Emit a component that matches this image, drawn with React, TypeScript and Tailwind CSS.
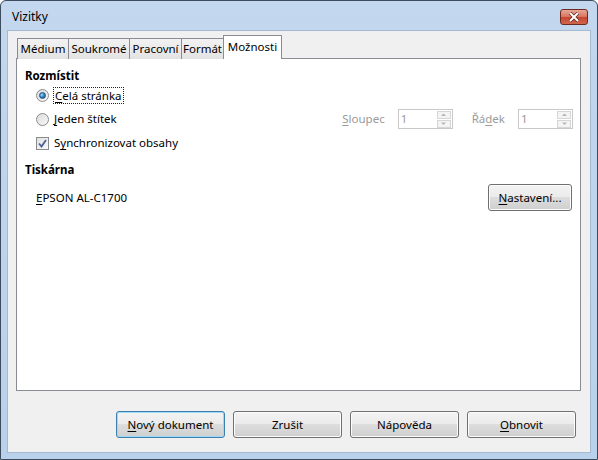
import React from "react";

const U = ({ children }: { children: React.ReactNode }) => <span className="underline underline-offset-2">{children}</span>;

const Radio = ({ checked }: { checked?: boolean }) => (
  <div className="w-[13px] h-[13px] rounded-full border border-[#8a8b8c] bg-gradient-to-br from-[#dcdcdc] to-[#f8f8f8] flex items-center justify-center shrink-0">
    {checked && (
      <div className="w-[7px] h-[7px] rounded-full bg-[radial-gradient(circle_at_35%_35%,#9fd6f7,#2a7dbd_55%,#1a4f86)] border border-[#1f4f7c]" />
    )}
  </div>
);

const Checkbox = () => (
  <div className="w-[13px] h-[13px] border border-[#8a8b8c] bg-gradient-to-br from-[#e0e0e0] to-[#fafafa] flex items-center justify-center shrink-0">
    <svg width="9" height="9" viewBox="0 0 9 9">
      <path d="M1 4.5 L3.5 7.5 L8 1" fill="none" stroke="#4a5f97" strokeWidth="1.8" />
    </svg>
  </div>
);

const Spin = () => (
  <div className="w-[55px] h-[20px] border border-[#c9c9c9] bg-white flex items-center justify-between pl-[2px] pr-px">
    <span className="text-[#9a9a9a] leading-none">1</span>
    <div className="flex flex-col gap-px">
      {["M1 4 L3.5 1.5 L6 4", "M1 1.5 L3.5 4 L6 1.5"].map((d) => (
        <div key={d} className="w-[14px] h-[8px] border border-[#d6d6d6] bg-[#f4f4f4] flex items-center justify-center">
          <svg width="7" height="5" viewBox="0 0 7 5"><path d={d} fill="#b5b5b5" /></svg>
        </div>
      ))}
    </div>
  </div>
);

const Button = ({ children, def, w = "w-[109px]" }: { children: React.ReactNode; def?: boolean; w?: string }) => (
  <button
    className={`${w} h-[27px] rounded-[3px] border ${def ? "border-[#3c7fb1] shadow-[inset_0_0_0_1px_#9fd9f5]" : "border-[#707070] shadow-[inset_0_0_0_1px_#fcfcfc]"} bg-[linear-gradient(#f3f3f3_0%,#ebebeb_49%,#dddddd_50%,#cfcfcf_100%)] text-black text-[11.5px]`}
  >
    {children}
  </button>
);

const Tab = ({ label, w }: { label: string; w: string }) => (
  <div className={`${w} h-[21px] -mr-px border border-[#898c95] border-b-0 bg-gradient-to-b from-[#f2f2f2] to-[#e3e3e3] flex items-center justify-center`}>{label}</div>
);

export default function App() {
  return (
    <div className="w-[598px] h-[460px] flex flex-col bg-gradient-to-b from-[#c3d7ee] to-[#b9d1ea] border border-[#3c4c5e] rounded-t-[6px] font-['Segoe_UI','Noto_Sans',sans-serif] text-[11.5px] text-black overflow-hidden">
      {/* title bar */}
      <div className="h-[29px] flex items-center justify-between pl-[11px] pr-[9px] pt-[2px] text-[12px]">
        <span>Vizitky</span>
        <div className="w-[28px] h-[16px] rounded-[3px] border border-[#6d2a22] bg-[linear-gradient(#e8a796_0%,#d7735e_50%,#c44631_51%,#d1664d_100%)] flex items-center justify-center">
          <svg width="12" height="10" viewBox="0 0 12 10">
            <path d="M2 1 L10 9 M10 1 L2 9" stroke="#5a231b" strokeWidth="3.4" />
            <path d="M2 1 L10 9 M10 1 L2 9" stroke="#ffffff" strokeWidth="2" />
          </svg>
        </div>
      </div>

      {/* client */}
      <div className="flex-1 mx-[6px] mb-[6px] border border-[#a5b9d1] bg-[#f0f0f0] flex flex-col">
        <div className="ml-[9px] mt-[5px] h-[23px] flex items-end relative z-10">
          <Tab label="Médium" w="w-[52px]" />
          <Tab label="Soukromé" w="w-[62px]" />
          <Tab label="Pracovní" w="w-[53px]" />
          <Tab label="Formát" w="w-[43px]" />
          <div className="w-[59px] h-[24px] border border-[#898c95] border-b-0 bg-white flex items-start justify-center pt-[2px]">Možnosti</div>
        </div>

        <div className="ml-[8px] -mt-px w-[565px] h-[333px] border border-[#898c95] bg-white flex flex-col">
          <div className="pl-[8px] pt-[9px] font-bold leading-[16px]">Rozmístit</div>
          <div className="pl-[19px] pr-[7px] flex flex-col">
            <div className="h-[23px] flex items-center gap-[5px]">
              <Radio checked />
              <span className="outline-1 outline-dotted outline-[#222] px-px leading-[15px]"><U>C</U>elá stránka</span>
            </div>
            <div className="h-[24px] flex items-center justify-between">
              <div className="flex items-center gap-[5px]">
                <Radio />
                <span><U>J</U>eden štítek</span>
              </div>
              <div className="flex items-center text-[#9a9a9a]">
                <span className="mr-[13px]"><U>S</U>loupec</span>
                <Spin />
                <span className="ml-[19px] mr-[13px]">Řá<U>d</U>ek</span>
                <Spin />
              </div>
            </div>
            <div className="h-[24px] flex items-center gap-[5px]">
              <Checkbox />
              <span>S<U>y</U>nchronizovat obsahy</span>
            </div>
          </div>

          <div className="pl-[8px] mt-[7px] font-bold leading-[16px]">Tiskárna</div>
          <div className="mt-[6px] pl-[19px] pr-[8px] h-[27px] flex items-center justify-between">
            <span><U>E</U>PSON AL-C1700</span>
            <Button w="w-[84px]"><U>N</U>astavení...</Button>
          </div>
        </div>

        <div className="mt-[20px] pr-[14px] flex justify-end gap-[8px]">
          <Button def><U>N</U>ový dokument</Button>
          <Button>Zrušit</Button>
          <Button>Nápověda</Button>
          <Button><U>O</U>bnovit</Button>
        </div>
      </div>
    </div>
  );
}
